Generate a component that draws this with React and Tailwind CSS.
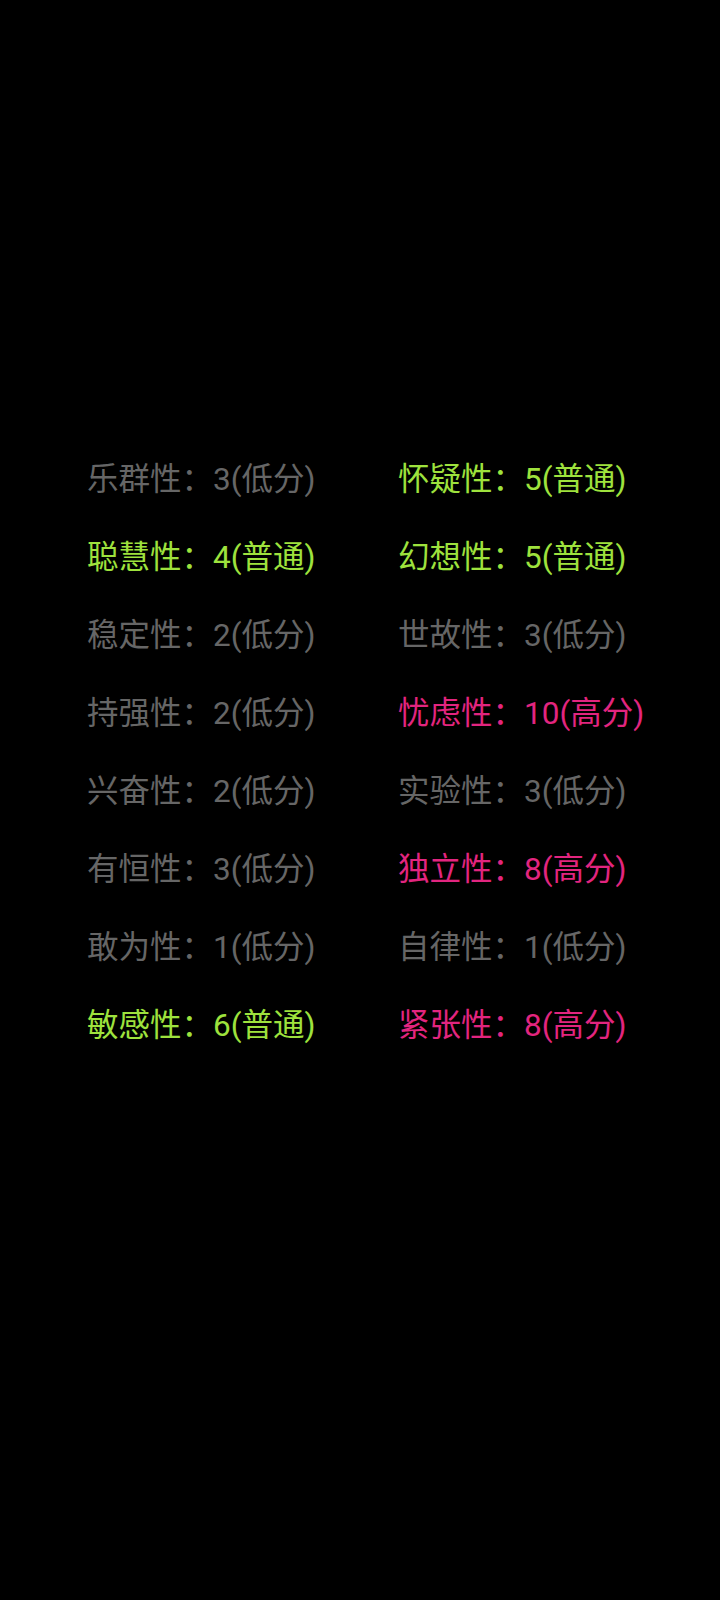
const rows = [
  [['乐群性', '3', '低分'], ['怀疑性', '5', '普通']],
  [['聪慧性', '4', '普通'], ['幻想性', '5', '普通']],
  [['稳定性', '2', '低分'], ['世故性', '3', '低分']],
  [['持强性', '2', '低分'], ['忧虑性', '10', '高分']],
  [['兴奋性', '2', '低分'], ['实验性', '3', '低分']],
  [['有恒性', '3', '低分'], ['独立性', '8', '高分']],
  [['敢为性', '1', '低分'], ['自律性', '1', '低分']],
  [['敏感性', '6', '普通'], ['紧张性', '8', '高分']],
];

const tone = {
  低分: 'text-[#666666]',
  普通: 'text-[#9ee23d]',
  高分: 'text-[#e2257f]',
};

function Trait({ item }) {
  const [name, score, level] = item;
  return (
    <div className={`h-[78px] leading-[78px] whitespace-nowrap ${tone[level]}`}>
      {name}：{score}({level})
    </div>
  );
}

export default function App() {
  return (
    <div
      className="min-h-[1600px] bg-black pt-[441px] text-[31.5px]"
      style={{ fontFamily: 'Roboto, "Noto Sans CJK SC", sans-serif' }}
    >
      <div className="grid grid-cols-[311px_1fr] pl-[87px]">
        {rows.map((r, i) => (
          <div key={i} className="contents">
            <Trait item={r[0]} />
            <Trait item={r[1]} />
          </div>
        ))}
      </div>
    </div>
  );
}
